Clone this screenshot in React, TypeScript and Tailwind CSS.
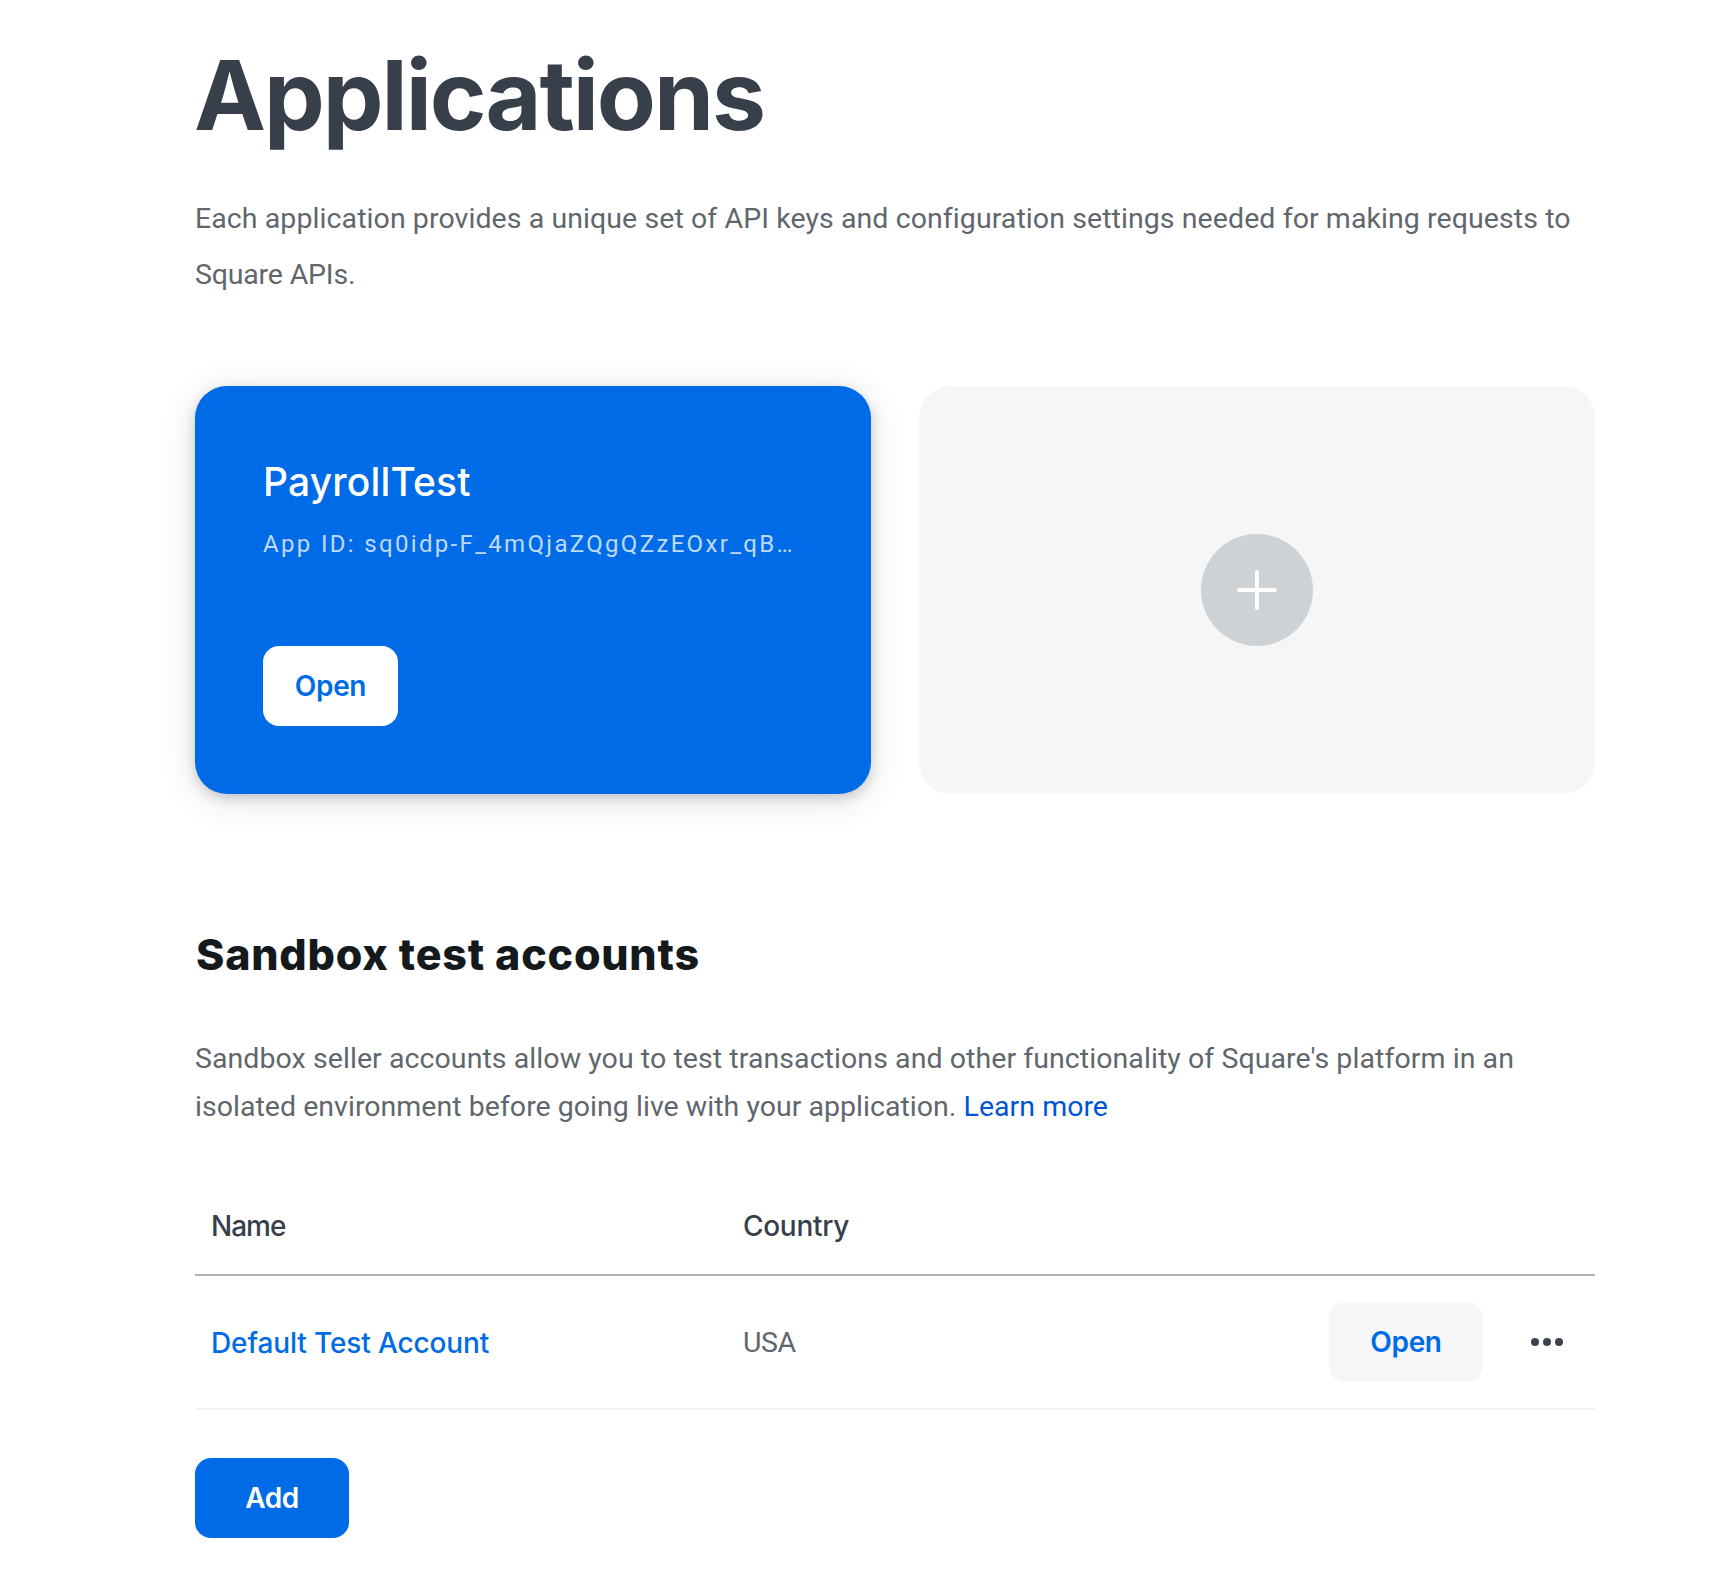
function PlusIcon() {
  return (
    <svg width="40" height="40" viewBox="0 0 40 40" fill="none" stroke="#fff" strokeWidth="4" strokeLinecap="round">
      <path d="M20 2V38M2 20H38" />
    </svg>
  );
}

function MoreIcon() {
  return (
    <svg width="32" height="8" viewBox="0 0 32 8" fill="#3d444f">
      <circle cx="4" cy="4" r="4" />
      <circle cx="16" cy="4" r="4" />
      <circle cx="28" cy="4" r="4" />
    </svg>
  );
}

const accounts = [{ name: 'Default Test Account', country: 'USA' }];

export default function App() {
  return (
    <main className="min-h-[1596px] w-[1710px] bg-white pt-[39px] pl-[195px] font-[Roboto,sans-serif]">
      <div className="flex w-[1400px] flex-col">
        <h1 className="-ml-px font-[Inter,sans-serif] text-[96.5px] leading-[112px] font-bold tracking-[-2.05px] text-[#373f4a]">
          Applications
        </h1>
        <p className="mt-10 text-[28.5px] leading-[56px] tracking-[0.08px] text-[#5f676d]">
          Each application provides a unique set of API keys and configuration settings needed for making requests to
          <br />
          <span className="tracking-[-0.18px]">Square APIs.</span>
        </p>

        <section className="mt-[83px] grid grid-cols-2 gap-12">
          <article className="flex h-[408px] min-w-0 flex-col items-start rounded-[32px] bg-[#006be6] p-[68px] shadow-[0_4px_12px_rgba(0,0,0,0.16),0_6px_36px_rgba(0,0,0,0.12)]">
            <h2 className="mt-1 font-[Inter,sans-serif] text-[39px] leading-[48px] font-medium tracking-[0.15px] text-white">
              PayrollTest
            </h2>
            <p className="mt-[22px] text-[24px] leading-8 tracking-[2.33px] whitespace-nowrap text-white/75">
              App ID: sq0idp-F_4mQjaZQgQZzEOxr_qB…
            </p>
            <button className="mt-auto h-20 w-[135px] rounded-2xl bg-white font-[Inter,sans-serif] text-[28px] font-semibold tracking-[-0.35px] text-[#006be6]">
              Open
            </button>
          </article>
          <button className="flex h-[408px] items-center justify-center rounded-[32px] bg-[#f5f6f8]" aria-label="Add application">
            <span className="flex size-28 items-center justify-center rounded-full bg-[#ced2d5]">
              <PlusIcon />
            </span>
          </button>
        </section>

        <h2 className="mt-[132px] ml-px font-[Inter,sans-serif] text-[43px] leading-[56px] font-extrabold tracking-[0.78px] text-[#14191c]">
          Sandbox test accounts
        </h2>
        <p className="mt-[53px] text-[28.5px] leading-[48px] tracking-[0.07px] text-[#5f676d]">
          Sandbox seller accounts allow you to test transactions and other functionality of Square's platform in an
          <br />
          <span className="tracking-[0.03px]">
            isolated environment before going live with your application.{' '}
            <a className="text-[#0055d4]">Learn more</a>
          </span>
        </p>

        <div className="mt-[79px] flex h-[66px] border-b-2 border-[#b2b2b2] px-4 font-[Inter,sans-serif] text-[28px] leading-8 font-medium text-[#373f4a]">
          <div className="w-[532px] tracking-[-1px]">Name</div>
          <div className="tracking-[-0.3px]">Country</div>
        </div>
        {accounts.map((a) => (
          <div key={a.name} className="flex h-[134px] items-center border-b-2 border-[#f2f2f2] pr-8 pl-4">
            <a className="w-[532px] pt-0.5 font-[Inter,sans-serif] text-[28px] font-medium tracking-[-0.13px] text-[#006be6]">
              {a.name}
            </a>
            <div className="pt-0.5 text-[28.5px] tracking-[-0.4px] text-[#5f676d]">{a.country}</div>
            <button className="ml-auto h-20 w-[154px] rounded-2xl bg-[#f5f6f8] font-[Inter,sans-serif] text-[28px] font-semibold tracking-[-0.35px] text-[#006be6]">
              Open
            </button>
            <button className="ml-12" aria-label="More actions">
              <MoreIcon />
            </button>
          </div>
        ))}
        <button className="mt-12 h-20 w-[154px] rounded-2xl bg-[#006be6] font-[Inter,sans-serif] text-[28px] font-semibold tracking-[-0.46px] text-white">
          Add
        </button>
      </div>
    </main>
  );
}
